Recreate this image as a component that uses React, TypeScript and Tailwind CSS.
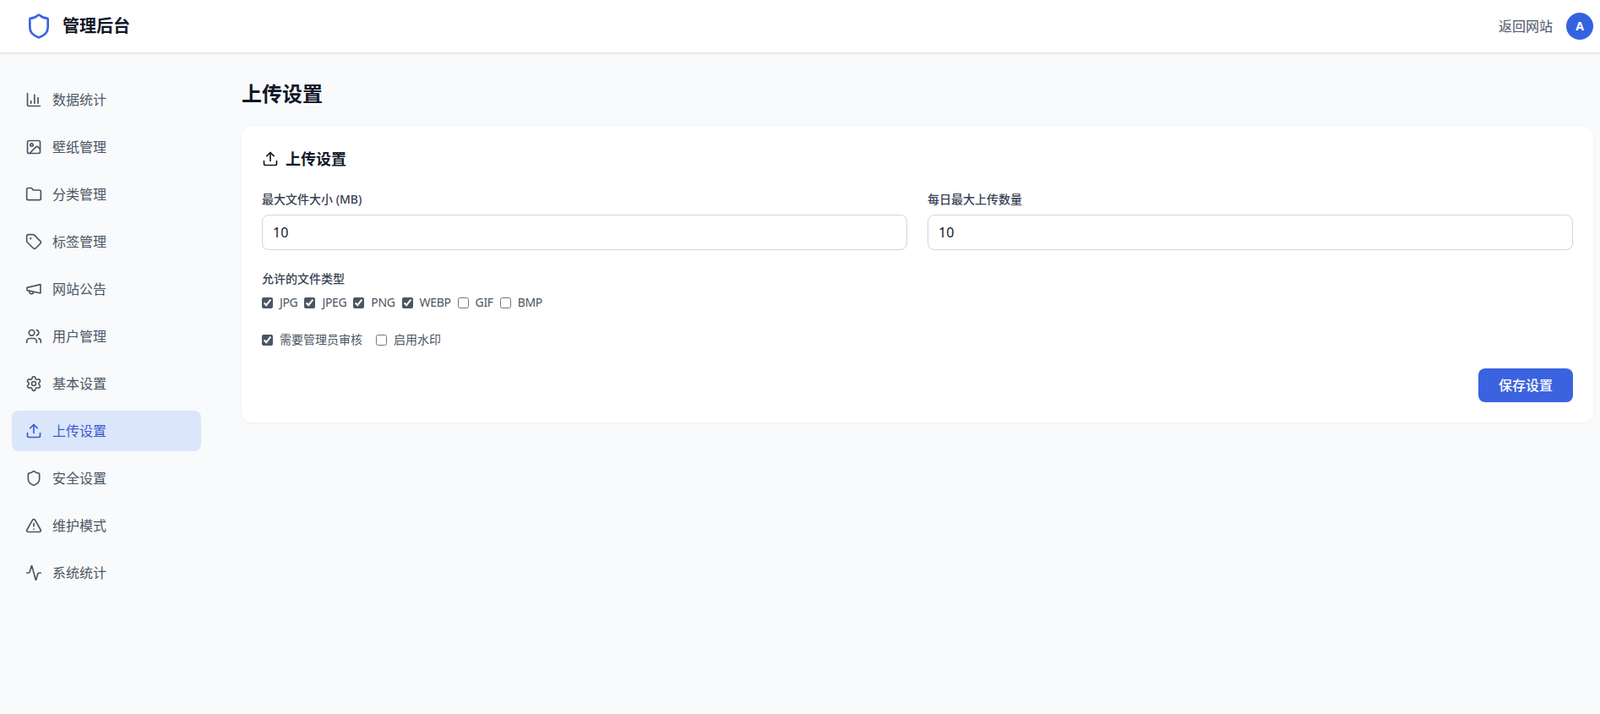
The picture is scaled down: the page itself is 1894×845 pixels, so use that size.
import {
  Activity,
  ChartColumn,
  Folder,
  Image,
  Settings,
  Shield,
  Tag,
  TriangleAlert,
  Upload,
  Users,
} from "lucide-react"

function Megaphone({ className, strokeWidth }: { className?: string; strokeWidth?: number }) {
  return (
    <svg
      viewBox="0 0 24 24"
      fill="none"
      stroke="currentColor"
      strokeWidth={strokeWidth}
      strokeLinecap="round"
      strokeLinejoin="round"
      className={className}
    >
      <path d="M21.5 5.5v12.5L2.5 14v-4z" />
      <path d="M11.6 16.8a3 3 0 1 1-5.8-1.6" />
    </svg>
  )
}

const navItems = [
  { label: "数据统计", icon: ChartColumn },
  { label: "壁纸管理", icon: Image },
  { label: "分类管理", icon: Folder },
  { label: "标签管理", icon: Tag },
  { label: "网站公告", icon: Megaphone },
  { label: "用户管理", icon: Users },
  { label: "基本设置", icon: Settings },
  { label: "上传设置", icon: Upload, active: true },
  { label: "安全设置", icon: Shield },
  { label: "维护模式", icon: TriangleAlert },
  { label: "系统统计", icon: Activity },
]

const fileTypes = [
  { label: "JPG", checked: true },
  { label: "JPEG", checked: true },
  { label: "PNG", checked: true },
  { label: "WEBP", checked: true },
  { label: "GIF", checked: false },
  { label: "BMP", checked: false },
]

function Check({ label, checked }: { label: string; checked: boolean }) {
  return (
    <label className="flex items-center gap-2 text-sm leading-5 text-[#4b5563]">
      <input
        type="checkbox"
        defaultChecked={checked}
        className="m-0 h-[13px] w-[13px] accent-[#4b5563]"
      />
      {label}
    </label>
  )
}

function NumberField({ label }: { label: string }) {
  return (
    <div>
      <label className="mb-2 block text-sm leading-5 font-medium text-[#374151]">{label}</label>
      <input
        type="text"
        defaultValue="10"
        className="h-[42px] w-full rounded-lg border border-[#d1d5db] bg-white px-3 text-base text-[#111827]"
      />
    </div>
  )
}

export default function App() {
  return (
    <div className="flex h-[845px] flex-col overflow-hidden bg-[#f8fafc] font-['Noto_Sans','Noto_Sans_CJK_SC',sans-serif]">
      {/* Header */}
      <header className="relative flex h-[62px] shrink-0 items-center justify-between bg-white pr-2 pl-[30px] shadow-[0_1px_3px_rgba(0,0,0,0.12)]">
        <div className="flex items-center gap-3">
          <Shield className="h-8 w-8 text-[#3b63e0]" />
          <span className="text-xl font-bold text-[#111827]">管理后台</span>
        </div>
        <div className="flex items-center gap-4">
          <a className="text-base text-[#4b5563]">返回网站</a>
          <div className="flex h-8 w-8 items-center justify-center rounded-full bg-[#3563e0] text-sm font-bold text-white">
            A
          </div>
        </div>
      </header>

      <div className="flex flex-1">
        {/* Sidebar */}
        <nav className="flex w-[252px] shrink-0 flex-col gap-2 pt-8 pl-[14px] pr-[14px]">
          {navItems.map((item) => (
            <a
              key={item.label}
              className={
                item.active
                  ? "flex h-12 items-center gap-3 rounded-lg bg-[#dbe6fa] px-4 text-base text-[#3b5bd0]"
                  : "flex h-12 items-center gap-3 rounded-lg px-4 text-base text-[#4b5563]"
              }
            >
              <item.icon className="h-5 w-5 shrink-0" strokeWidth={2} />
              {item.label}
            </a>
          ))}
        </nav>

        {/* Main */}
        <main className="flex-1 pt-[33px] pr-2 pl-[34px]">
          <h1 className="mb-[23px] text-2xl leading-8 font-bold text-[#111827]">上传设置</h1>
          <section className="rounded-xl bg-white p-6 shadow-[0_1px_3px_rgba(0,0,0,0.05)]">
            <h2 className="mb-6 flex h-7 items-center gap-2 text-lg font-semibold text-[#111827]">
              <Upload className="h-5 w-5" strokeWidth={2} />
              上传设置
            </h2>
            <div className="grid grid-cols-2 gap-6">
              <NumberField label="最大文件大小 (MB)" />
              <NumberField label="每日最大上传数量" />
            </div>
            <div className="mt-6">
              <div className="mb-2 text-sm leading-5 font-medium text-[#374151]">允许的文件类型</div>
              <div className="flex gap-2 tracking-[-0.35px]">
                {fileTypes.map((type) => (
                  <Check key={type.label} label={type.label} checked={type.checked} />
                ))}
              </div>
            </div>
            <div className="mt-6 flex gap-4">
              <Check label="需要管理员审核" checked />
              <Check label="启用水印" checked={false} />
            </div>
            <div className="mt-6 flex justify-end">
              <button className="h-10 w-28 rounded-lg bg-[#3b63e0] text-base font-medium text-white">
                保存设置
              </button>
            </div>
          </section>
        </main>
      </div>
    </div>
  )
}
